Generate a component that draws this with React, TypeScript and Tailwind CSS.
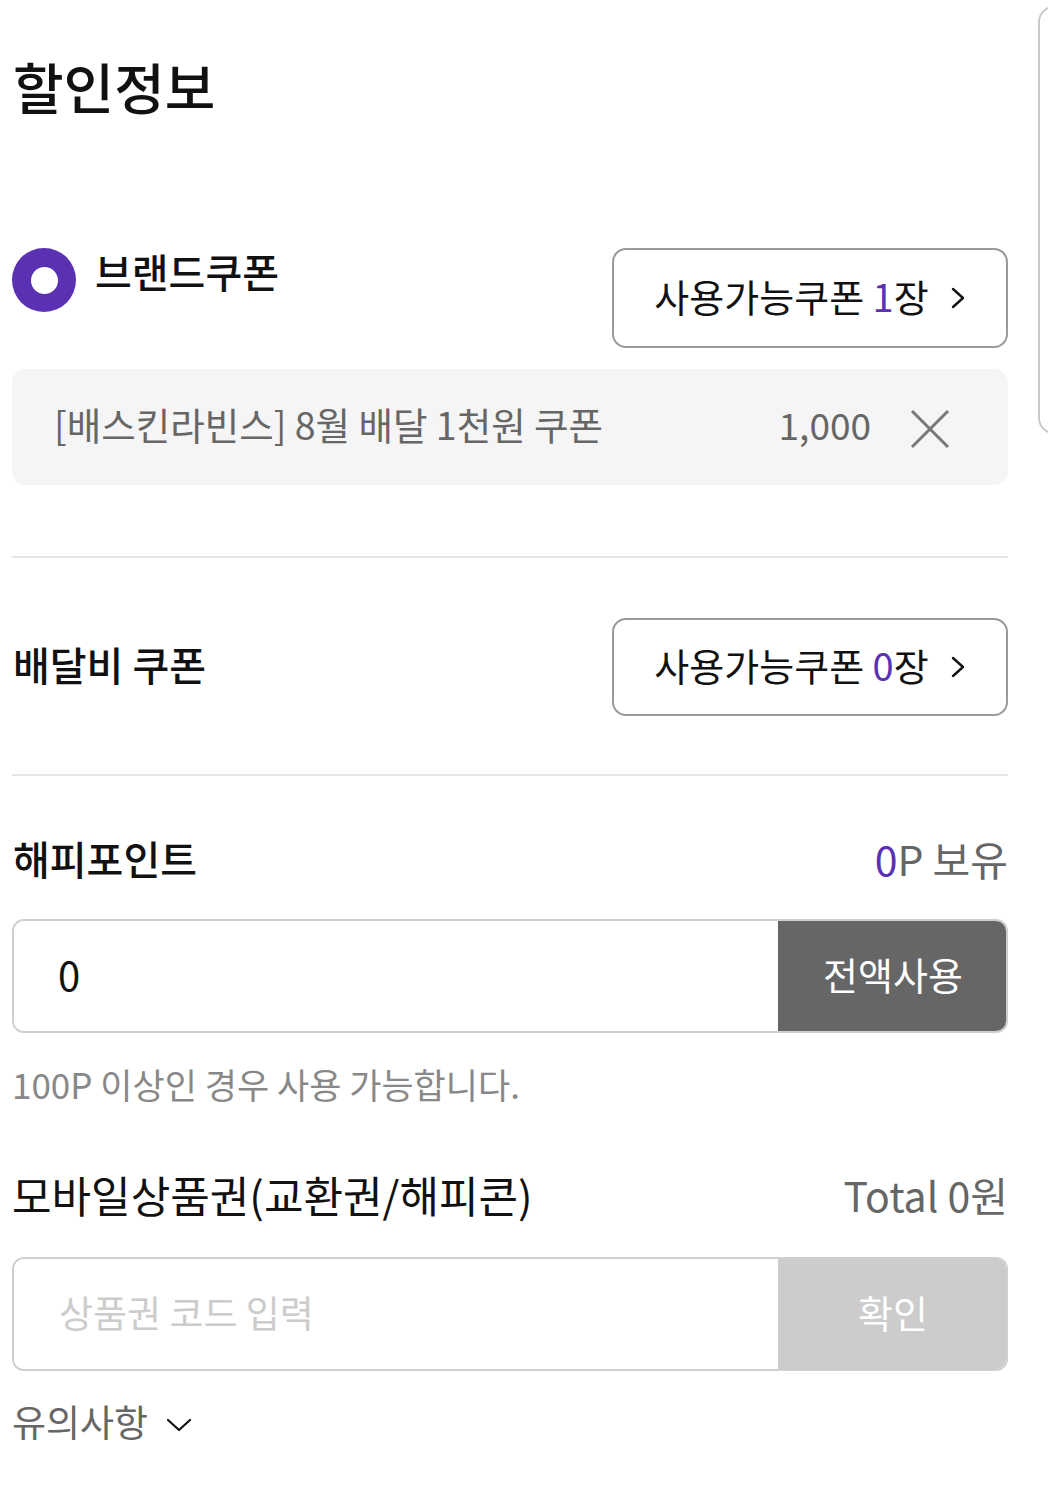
import React from "react";

const FONT = { fontFamily: '"Noto Sans CJK KR", "Noto Sans", sans-serif' };

function Chevron() {
  return (
    <svg width="16" height="26" viewBox="0 0 16 26" className="shrink-0">
      <polyline points="3,4 13,13 3,22" fill="none" stroke="#111" strokeWidth="2.4" strokeLinecap="round" strokeLinejoin="round" />
    </svg>
  );
}

function CouponButton({ count }: { count: string }) {
  return (
    <div className="w-[396px] h-full border-2 border-[#9a9a9a] rounded-[14px] flex items-center justify-center gap-[21px]">
      <span className="text-[38px] leading-none text-[#111] mb-[5px]">
        사용가능쿠폰 <span className="text-[#5b31b4]">{count}</span>장
      </span>
      <Chevron />
    </div>
  );
}

export default function App() {
  return (
    <div className="w-[1048px] h-[1509px] bg-white overflow-hidden flex" style={FONT}>
      <main className="w-[1038px] shrink-0 pl-3 pr-[30px] flex flex-col">
        <div className="h-[176px] flex items-center">
          <h1 className="text-[55px] leading-none font-medium text-[#111] pl-[1px] mb-[5px]">할인정보</h1>
        </div>

        <div className="mt-[72px] h-[100px] flex justify-between items-start">
          <div className="flex items-center gap-[19px] h-[64px]">
            <div className="w-[64px] h-[64px] rounded-full bg-[#5b31b4] flex items-center justify-center">
              <div className="w-[27px] h-[27px] rounded-full bg-white" />
            </div>
            <span className="text-[40px] leading-none font-medium text-[#111] mb-[18px]">브랜드쿠폰</span>
          </div>
          <CouponButton count="1" />
        </div>

        <div className="mt-[21px] h-[116px] rounded-[14px] bg-[#f5f5f5] flex items-center pl-[42px] pr-[58px]">
          <span className="text-[37.5px] leading-none text-[#666] flex-1 mb-[6px]">[배스킨라빈스] 8월 배달 1천원 쿠폰</span>
          <span className="text-[37px] leading-none text-[#666] mb-[6px]">1,000</span>
          <svg width="40" height="40" viewBox="0 0 40 40" className="ml-[39px] mt-[4px]">
            <path d="M2 2 L38 38 M38 2 L2 38" stroke="#777" strokeWidth="3" fill="none" />
          </svg>
        </div>

        <div className="mt-[71px] h-[2px] bg-[#e6e6e6]" />

        <div className="mt-[60px] h-[98px] flex justify-between items-center">
          <span className="text-[40px] leading-none font-medium text-[#111] pl-[1px] mb-[6px]">배달비 쿠폰</span>
          <CouponButton count="0" />
        </div>

        <div className="mt-[58px] h-[2px] bg-[#e6e6e6]" />

        <div className="mt-[54px] h-[60px] flex justify-between items-center">
          <span className="text-[40px] leading-none font-medium text-[#111] pl-[1px] mb-[4px]">해피포인트</span>
          <span className="text-[41px] leading-none text-[#666] mb-[4px]">
            <span className="text-[#5b31b4]">0</span>P 보유
          </span>
        </div>

        <div className="mt-[29px] h-[114px] flex border-2 border-[#cfcfcf] rounded-[12px] overflow-hidden">
          <div className="flex-1 flex items-center pl-[44px] text-[40px] leading-none text-[#111] bg-white pb-[4px]">0</div>
          <div className="w-[230px] -my-[2px] -mr-[2px] bg-[#666] rounded-r-[12px] flex items-center justify-center text-[38px] leading-none text-white pb-[4px]">
            전액사용
          </div>
        </div>

        <div className="mt-[32px] h-[40px] flex items-center text-[35px] leading-none text-[#888] pb-[4px]">
          100P 이상인 경우 사용 가능합니다.
        </div>

        <div className="mt-[61px] h-[60px] flex justify-between items-center">
          <span className="text-[43px] leading-none text-[#111] mb-[4px]">모바일상품권(교환권/해피콘)</span>
          <span className="text-[41px] leading-none text-[#666] mb-[4px]">Total 0원</span>
        </div>

        <div className="mt-[31px] h-[114px] flex border-2 border-[#cfcfcf] rounded-[12px] overflow-hidden">
          <div className="flex-1 flex items-center pl-[45px] text-[37px] leading-none text-[#cccccc] bg-white pb-[4px]">
            상품권 코드 입력
          </div>
          <div className="w-[230px] -my-[2px] -mr-[2px] bg-[#cccccc] rounded-r-[12px] flex items-center justify-center text-[38px] leading-none text-white pb-[4px]">
            확인
          </div>
        </div>

        <div className="mt-[31px] h-[40px] flex items-center gap-[18px]">
          <span className="text-[37px] leading-none text-[#666] mb-[2px]">유의사항</span>
          <svg width="26" height="16" viewBox="0 0 26 16" className="mt-[6px]">
            <polyline points="2,3 13,13 24,3" fill="none" stroke="#111" strokeWidth="2.2" strokeLinecap="round" strokeLinejoin="round" />
          </svg>
        </div>
      </main>

      <div className="shrink-0 w-[300px] mt-[6px] h-[428px] border-2 border-[#c8c8c8] rounded-[16px]" />
    </div>
  );
}
